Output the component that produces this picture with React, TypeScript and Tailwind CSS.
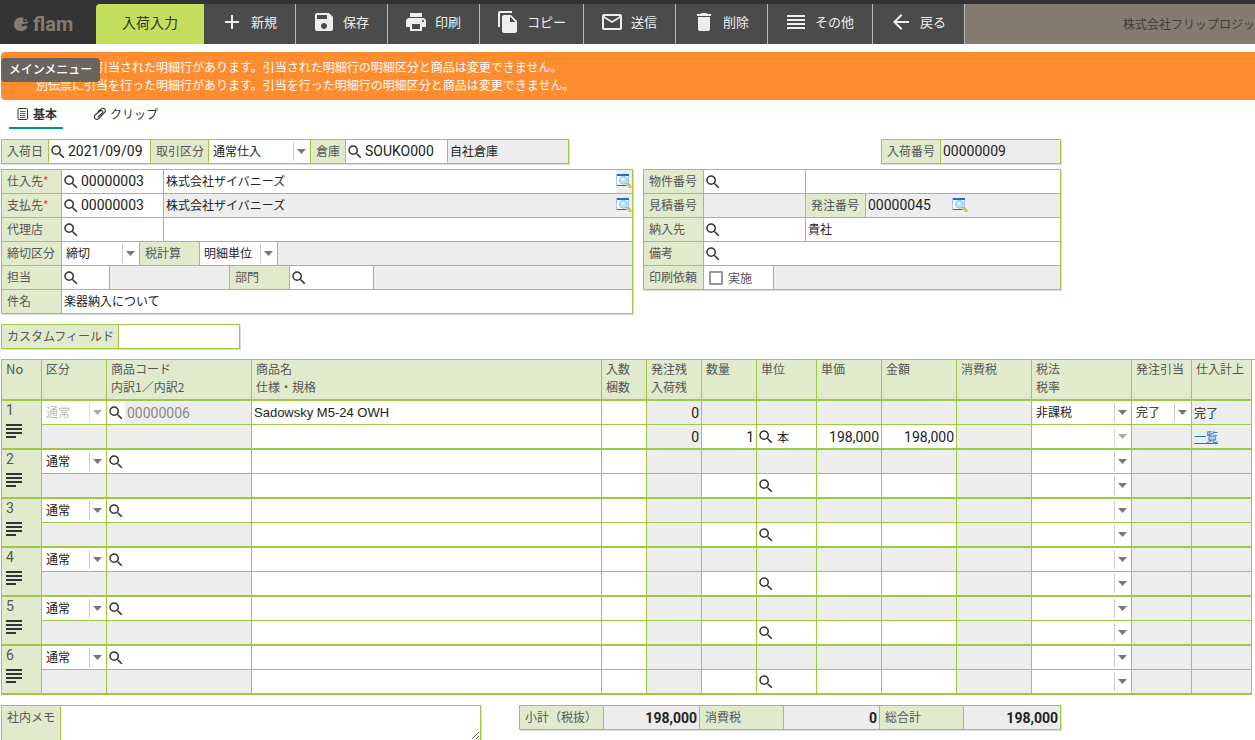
import { useId } from "react";
import { clsx } from "clsx";
import {
  MdAdd,
  MdArrowBack,
  MdDelete,
  MdFileCopy,
  MdMailOutline,
  MdPrint,
  MdReorder,
  MdSave,
  MdSearch,
  MdSubject,
} from "react-icons/md";

const LINE = "border-[#a0c846]";
const NUM = "font-[Roboto,'Noto_Sans_CJK_JP',sans-serif] text-sm";

/* ── Drawings ── */

function LogoMark() {
  return (
    <svg width="15" height="15" viewBox="0 0 15 15" aria-hidden="true">
      <path
        d="M9.8 0.9A7 7 0 1 0 13.6 9.4L11 8.6 8.6 9.8 7.2 8 8.6 7 14.4 6.2 14 4.6 10.4 5.2 8.8 4.6Z"
        fill="#857c70"
      />
      <path d="M11 1.6 13.4 3.2 10.6 4.2Z" fill="#857c70" />
    </svg>
  );
}

function SheetIcon() {
  return (
    <svg width="12" height="14" viewBox="0 0 12 14" fill="none" stroke="#333" aria-hidden="true">
      <rect x="1" y="1.5" width="9.5" height="11" rx="1" />
      <path d="M3 4.5h5.5M3 6.5h5.5M3 8.5h5.5M3 10.5h5.5" strokeWidth="0.8" />
    </svg>
  );
}

function ClipIcon() {
  return (
    <svg width="13" height="14" viewBox="0 0 13 14" fill="none" stroke="#333" strokeWidth="1.1" strokeLinecap="round" aria-hidden="true">
      <path d="M5.2 4.4 8.2 1.9a2.4 2.4 0 0 1 3.4 3.4L6 11.4a2.6 2.6 0 0 1-4.2-3.2L7.4 3.8a1.4 1.4 0 0 1 2 2L5 10" />
    </svg>
  );
}

function PreviewIcon() {
  return (
    <svg width="16" height="16" viewBox="0 0 16 16" aria-hidden="true">
      <rect x="0.5" y="1.5" width="12" height="11" fill="#fafcff" stroke="#a9c4e6" />
      <rect x="1" y="1" width="12" height="2" fill="#2f62d9" />
      <rect x="1" y="12" width="9" height="1" fill="#3a5f9e" />
      <circle cx="7.6" cy="7.3" r="4" fill="#aee6fb" stroke="#8cc4ee" />
      <circle cx="6.6" cy="6.2" r="1.5" fill="#e6faff" />
      <path d="M11 10.5 15 14.5" stroke="#a8812c" strokeWidth="2.4" />
      <path d="M11.2 10.7 14.8 14.3" stroke="#f7e3a0" strokeWidth="1.2" />
    </svg>
  );
}

/* ── Form parts ── */

function Cell({ className, children }: { className?: string; children?: React.ReactNode }) {
  return (
    <div className={clsx("flex h-6 items-center border-l border-t", LINE, className)}>{children}</div>
  );
}

function LabelCell({
  htmlFor,
  required,
  className = "w-[60px]",
  children,
}: {
  htmlFor?: string;
  required?: boolean;
  className?: string;
  children: React.ReactNode;
}) {
  return (
    <Cell className={clsx("shrink-0 bg-[#e1eacd] pb-0.5 pl-[5px] text-[#555]", className)}>
      <label htmlFor={htmlFor} className="whitespace-nowrap">
        {children}
        {required && <span className="text-red-500">*</span>}
      </label>
    </Cell>
  );
}

function SearchButton() {
  return (
    <button type="button" aria-label="検索" className="shrink-0 cursor-pointer text-[#333]">
      <MdSearch size={18} />
    </button>
  );
}

function Field({
  id,
  name,
  value,
  search,
  numeric,
  gray,
  className,
}: {
  id?: string;
  name?: string;
  value?: string;
  search?: boolean;
  numeric?: boolean;
  gray?: boolean;
  className?: string;
}) {
  return (
    <Cell className={clsx(gray ? "bg-[#ededed]" : "bg-white", className)}>
      {search && <SearchButton />}
      <input
        id={id}
        aria-label={name}
        defaultValue={value}
        readOnly={gray}
        className={clsx(
          "h-full w-full min-w-0 pb-0.5 text-[#222] outline-none",
          search ? "pl-px" : "pl-0.5",
          numeric && NUM
        )}
      />
    </Cell>
  );
}

function Select({ id, name, value = "", disabled }: { id?: string; name?: string; value?: string; disabled?: boolean }) {
  return (
    <div className="relative h-full w-full">
      <select
        id={id}
        aria-label={name}
        defaultValue={value}
        disabled={disabled}
        className={clsx(
          "h-full w-full appearance-none pb-0.5 pl-1 pr-4 outline-none disabled:opacity-100",
          disabled ? "text-[#bbb]" : "text-[#222]"
        )}
      >
        <option>{value}</option>
      </select>
      <span
        className={clsx(
          "pointer-events-none absolute inset-y-0.5 right-0 flex w-[17px] items-center border-l pl-[3px]",
          disabled ? "border-[#ddd] text-[#aaa]" : "border-[#ccc] text-[#777]"
        )}
      >
        <svg width="9" height="5" viewBox="0 0 9 5" fill="currentColor" aria-hidden="true">
          <path d="M0 0h9L4.5 5z" />
        </svg>
      </span>
    </div>
  );
}

function Group({ className, children }: { className?: string; children: React.ReactNode }) {
  return (
    <div className={clsx("border-b border-r shadow-[1px_1px_0_#ddd]", LINE, className)}>{children}</div>
  );
}

/* ── Header ── */

const actions = [
  { label: "新規", icon: MdAdd, width: "w-[92px]" },
  { label: "保存", icon: MdSave, width: "w-[92px]" },
  { label: "印刷", icon: MdPrint, width: "w-[92px]" },
  { label: "コピー", icon: MdFileCopy, width: "w-[104px]" },
  { label: "送信", icon: MdMailOutline, width: "w-[92px]" },
  { label: "削除", icon: MdDelete, width: "w-[92px]" },
  { label: "その他", icon: MdReorder, width: "w-[105px]" },
  { label: "戻る", icon: MdArrowBack, width: "w-[92px]" },
];

function Header() {
  return (
    <header className="flex h-11 bg-[#333] pt-1">
      <a href="#menu" className="flex w-24 shrink-0 items-center gap-1 pl-3.5">
        <LogoMark />
        <span className="font-[Roboto,sans-serif] text-xl font-bold text-[#857c70]">flam</span>
      </a>
      <h1 className="flex w-[108px] shrink-0 items-center justify-center rounded-tl bg-[#c4df5d] pb-1 text-sm text-[#333]">
        入荷入力
      </h1>
      <nav className="flex shrink-0">
        {actions.map(({ label, icon: Icon, width }) => (
          <button
            key={label}
            type="button"
            className={clsx(
              "flex cursor-pointer items-center gap-[7px] whitespace-nowrap border-r border-[#bbb] bg-[#4b4b4b] pb-1 pl-4 text-[13px] text-[#eee] hover:bg-[#5a5a5a]",
              width
            )}
          >
            <Icon size={24} className="shrink-0" />
            {label}
          </button>
        ))}
      </nav>
      <div className="flex min-w-0 flex-1 items-center justify-end overflow-hidden whitespace-nowrap bg-[#857c70] text-[#3c3c3c]">
        株式会社フリップロジッ
      </div>
    </header>
  );
}

function Notice() {
  return (
    <div className="relative ml-px mt-2 rounded-l bg-[#ff8d30] py-1.5 pl-[35px] leading-[18px] text-white">
      <p>別伝票から引当された明細行があります。引当された明細行の明細区分と商品は変更できません。</p>
      <p>別伝票に引当を行った明細行があります。引当を行った明細行の明細区分と商品は変更できません。</p>
      <div
        role="tooltip"
        className="absolute left-0 top-1.5 flex h-6 w-[99px] items-center justify-center rounded bg-[#616161]/95 pb-0.5 font-medium text-white"
      >
        メインメニュー
      </div>
    </div>
  );
}

function Tabs() {
  return (
    <nav className="flex h-[29px] gap-[22px] pl-[9px] text-[#333]">
      <a href="#basic" className="flex items-center gap-1 border-b-2 border-[#009688] pl-2 pr-1.5 font-bold">
        <SheetIcon />
        基本
      </a>
      <a href="#clip" className="flex items-center gap-1 border-b-2 border-transparent px-2">
        <ClipIcon />
        クリップ
      </a>
    </nav>
  );
}

/* ── Slip form ── */

function SlipForm() {
  const id = useId();
  return (
    <section className="ml-px mt-2.5 max-w-[1060px]">
      <div className="flex justify-between">
        <Group className="flex">
          <LabelCell htmlFor={id + "date"} className="w-[47px]">入荷日</LabelCell>
          <Field id={id + "date"} search numeric value="2021/09/09" className="w-[102px]" />
          <LabelCell htmlFor={id + "type"} className="w-[58px]">取引区分</LabelCell>
          <Cell className="w-[102px]"><Select id={id + "type"} value="通常仕入" /></Cell>
          <LabelCell htmlFor={id + "wh"} className="w-[35px]">倉庫</LabelCell>
          <Field id={id + "wh"} search numeric value="SOUKO000" className="w-[102px]" />
          <Field name="倉庫名" gray value="自社倉庫" className="w-[121px]" />
        </Group>
        <Group className="flex">
          <LabelCell htmlFor={id + "no"} className="w-[59px]">入荷番号</LabelCell>
          <Field id={id + "no"} gray numeric value="00000009" className="w-[120px]" />
        </Group>
      </div>

      <div className="mt-[5px] flex items-start gap-2.5">
        <Group className="min-w-0 flex-1">
          <div className="flex">
            <LabelCell htmlFor={id + "sup"} required>仕入先</LabelCell>
            <Field id={id + "sup"} search numeric value="00000003" className="w-[102px]" />
            <Field name="仕入先名" value="株式会社ザイバニーズ" className="flex-1" />
            <div className={clsx("flex border-t bg-[#ededed] pt-[3px]", LINE)}>
              <button type="button" aria-label="仕入先を表示" className="h-4"><PreviewIcon /></button>
            </div>
          </div>
          <div className="flex">
            <LabelCell htmlFor={id + "pay"} required>支払先</LabelCell>
            <Field id={id + "pay"} search numeric value="00000003" className="w-[102px]" />
            <Field name="支払先名" gray value="株式会社ザイバニーズ" className="flex-1" />
            <div className={clsx("flex border-t bg-[#ededed] pt-[3px]", LINE)}>
              <button type="button" aria-label="支払先を表示" className="h-4"><PreviewIcon /></button>
            </div>
          </div>
          <div className="flex">
            <LabelCell htmlFor={id + "agency"}>代理店</LabelCell>
            <Field id={id + "agency"} search numeric className="w-[102px]" />
            <Field name="代理店名" className="flex-1" />
          </div>
          <div className="flex">
            <LabelCell htmlFor={id + "close"}>締切区分</LabelCell>
            <Cell className="w-[78px]"><Select id={id + "close"} value="締切" /></Cell>
            <LabelCell htmlFor={id + "tax"}>税計算</LabelCell>
            <Cell className="w-[78px]"><Select id={id + "tax"} value="明細単位" /></Cell>
            <Cell className="flex-1 bg-[#ededed]" />
          </div>
          <div className="flex">
            <LabelCell htmlFor={id + "staff"}>担当</LabelCell>
            <Field id={id + "staff"} search className="w-12" />
            <Field name="担当者名" gray className="w-[120px]" />
            <LabelCell htmlFor={id + "dept"}>部門</LabelCell>
            <Field id={id + "dept"} search className="w-[84px]" />
            <Field name="部門名" gray className="flex-1" />
          </div>
          <div className="flex">
            <LabelCell htmlFor={id + "subject"}>件名</LabelCell>
            <Field id={id + "subject"} value="楽器納入について" className="flex-1" />
          </div>
        </Group>

        <Group className="w-[418px] shrink-0">
          <div className="flex">
            <LabelCell htmlFor={id + "prop"}>物件番号</LabelCell>
            <Field id={id + "prop"} search className="w-[102px]" />
            <Field name="物件名" className="flex-1" />
          </div>
          <div className="flex">
            <LabelCell htmlFor={id + "est"}>見積番号</LabelCell>
            <Field id={id + "est"} gray className="w-[102px]" />
            <LabelCell htmlFor={id + "order"}>発注番号</LabelCell>
            <Field id={id + "order"} gray numeric value="00000045" className="w-[87px]" />
            <div className={clsx("flex flex-1 border-t bg-[#ededed] pt-[3px]", LINE)}>
              <button type="button" aria-label="発注を表示" className="h-4"><PreviewIcon /></button>
            </div>
          </div>
          <div className="flex">
            <LabelCell htmlFor={id + "dest"}>納入先</LabelCell>
            <Field id={id + "dest"} search className="w-[102px]" />
            <Field name="納入先名" value="貴社" className="flex-1" />
          </div>
          <div className="flex">
            <LabelCell htmlFor={id + "note"}>備考</LabelCell>
            <Field id={id + "note"} search className="flex-1" />
          </div>
          <div className="flex">
            <LabelCell htmlFor={id + "print"}>印刷依頼</LabelCell>
            <Cell className="w-[70px] pl-[5px] text-[#555]">
              <label className="flex items-center gap-[5px]">
                <input
                  id={id + "print"}
                  type="checkbox"
                  className="size-3.5 appearance-none rounded-[1px] border-2 border-[#999] bg-white"
                />
                実施
              </label>
            </Cell>
            <Cell className="flex-1 bg-[#ededed]" />
          </div>
        </Group>
      </div>

      <Group className="mt-2.5 flex w-fit">
        <LabelCell htmlFor={id + "custom"} className="w-[117px]">カスタムフィールド</LabelCell>
        <Field id={id + "custom"} className="w-[121px]" />
      </Group>
    </section>
  );
}

/* ── Detail lines ── */

type Line = {
  no: number;
  code?: string;
  name?: string;
  orderRest?: string;
  stockRest?: string;
  qty?: string;
  unit?: string;
  price?: string;
  amount?: string;
  taxType?: string;
  allocation?: string;
  posted?: string;
};

const lines: Line[] = [
  {
    no: 1,
    code: "00000006",
    name: "Sadowsky M5-24 OWH",
    orderRest: "0",
    stockRest: "0",
    qty: "1",
    unit: "本",
    price: "198,000",
    amount: "198,000",
    taxType: "非課税",
    allocation: "完了",
    posted: "完了",
  },
  { no: 2 },
  { no: 3 },
  { no: 4 },
  { no: 5 },
  { no: 6 },
];

const columns = [
  { head: ["No"], width: "w-10" },
  { head: ["区分"], width: "w-[65px]" },
  { head: ["商品コード", "内訳1／内訳2"], width: "w-[145px]" },
  { head: ["商品名", "仕様・規格"], width: "" },
  { head: ["入数", "梱数"], width: "w-[45px]" },
  { head: ["発注残", "入荷残"], width: "w-[55px]" },
  { head: ["数量"], width: "w-[55px]" },
  { head: ["単位"], width: "w-[60px]" },
  { head: ["単価"], width: "w-[65px]" },
  { head: ["金額"], width: "w-[75px]" },
  { head: ["消費税"], width: "w-[75px]" },
  { head: ["税法", "税率"], width: "w-[100px]" },
  { head: ["発注引当"], width: "w-[60px]" },
  { head: ["仕入計上"], width: "w-[61px]" },
];

function Td({ gray, last, className, children }: { gray?: boolean; last?: boolean; className?: string; children?: React.ReactNode }) {
  return (
    <td
      className={clsx(
        "border-l p-0 text-[#222] last:border-r",
        LINE,
        last ? "h-[25px] border-b-2" : "h-6 border-b",
        gray ? "bg-[#ededed]" : "bg-white",
        className
      )}
    >
      {children}
    </td>
  );
}

function CellInput({ name, value, className }: { name: string; value?: string; className?: string }) {
  return (
    <input
      aria-label={name}
      defaultValue={value}
      className={clsx("block h-[23px] w-full min-w-0 px-0.5 outline-none", className)}
    />
  );
}

function CellSelect(props: { name: string; value?: string; disabled?: boolean }) {
  return (
    <div className="h-[23px]">
      <Select {...props} />
    </div>
  );
}

function LineRows({ line }: { line: Line }) {
  const locked = Boolean(line.code);
  const right = clsx(NUM, "text-right");
  return (
    <>
      <tr>
        <td
          rowSpan={2}
          className={clsx("border-b-2 border-l bg-[#e1eacd] p-0 align-top text-[#333]", LINE)}
        >
          <div className={clsx(NUM, "h-[18px] pl-1 leading-[18px]! text-[#555]")}>{line.no}</div>
          <button type="button" aria-label="明細メニュー" className="block cursor-pointer">
            <MdSubject size={24} />
          </button>
        </td>
        <Td><CellSelect name="区分" value="通常" disabled={locked} /></Td>
        <Td>
          <div className="flex h-[23px] items-center">
            <SearchButton />
            <CellInput
              name="商品コード"
              value={line.code}
              className={clsx(NUM, locked && "bg-[#ededed] text-[#888]")}
            />
          </div>
        </Td>
        <Td>
          <CellInput
            name="商品名"
            value={line.name}
            className="font-['Liberation_Sans','Noto_Sans_CJK_JP',sans-serif] text-[13px]"
          />
        </Td>
        <Td><CellInput name="入数" className={right} /></Td>
        <Td gray className={clsx(right, "pr-0.5")}>{line.orderRest}</Td>
        <Td gray />
        <Td gray />
        <Td gray />
        <Td gray />
        <Td gray />
        <Td><CellSelect name="税法" value={line.taxType} /></Td>
        {line.allocation ? (
          <Td><CellSelect name="発注引当" value={line.allocation} /></Td>
        ) : (
          <Td gray />
        )}
        <Td gray className="pl-0.5">{line.posted}</Td>
      </tr>
      <tr>
        <Td last gray />
        <Td last gray />
        <Td last><CellInput name="仕様・規格" /></Td>
        <Td last><CellInput name="梱数" className={right} /></Td>
        <Td last gray className={clsx(right, "pr-0.5")}>{line.stockRest}</Td>
        <Td last><CellInput name="数量" value={line.qty} className={right} /></Td>
        <Td last>
          <div className="flex h-[22px] items-center">
            <SearchButton />
            <CellInput name="単位" value={line.unit} />
          </div>
        </Td>
        <Td last><CellInput name="単価" value={line.price} className={right} /></Td>
        <Td last><CellInput name="金額" value={line.amount} className={right} /></Td>
        <Td last gray />
        <Td last><CellSelect name="税率" disabled={locked} /></Td>
        <Td last gray />
        <Td last gray className="pl-0.5">
          {line.posted && <a href="#list" className="text-[#1976d2] underline">一覧</a>}
        </Td>
      </tr>
    </>
  );
}

function DetailTable() {
  return (
    <section className={clsx("ml-px mt-2.5 border-t pr-[3px]", LINE)}>
      <table className="w-full table-fixed border-separate border-spacing-0">
        <thead>
          <tr>
            {columns.map(({ head, width }) => (
              <th
                key={head[0]}
                className={clsx(
                  "h-[41px] whitespace-nowrap border-b-2 border-l bg-[#e1eacd] p-0 pl-1 text-left align-top font-normal leading-[18px] text-[#555] last:border-r",
                  LINE,
                  width,
                  head[0] === "No" && "text-[13px]"
                )}
              >
                {head.map((text) => (
                  <div key={text}>{text}</div>
                ))}
              </th>
            ))}
          </tr>
        </thead>
        <tbody>
          {lines.map((line) => (
            <LineRows key={line.no} line={line} />
          ))}
        </tbody>
      </table>
    </section>
  );
}

/* ── Memo and totals ── */

const totals = [
  { label: "小計（税抜）", value: "198,000" },
  { label: "消費税", value: "0" },
  { label: "総合計", value: "198,000" },
];

function Footer() {
  return (
    <footer className="ml-px mt-2.5 flex max-w-[1060px] items-start justify-between">
      <Group className="flex w-[480px]">
        <label
          htmlFor="memo"
          className={clsx("w-[59px] shrink-0 border-l border-t bg-[#e1eacd] pl-[5px] pt-px leading-5 text-[#555]", LINE)}
        >
          社内メモ
        </label>
        <textarea id="memo" className={clsx("block h-[35px] w-full resize border-l border-t outline-none", LINE)} />
      </Group>
      <Group className="flex w-[542px]">
        {totals.map(({ label, value }) => (
          <div key={label} className="flex last:flex-1">
            <LabelCell className="w-[84px]">{label}</LabelCell>
            <Cell className={clsx("min-w-24 flex-1 justify-end bg-[#ededed] pr-0.5 font-bold text-[#222]", NUM)}>
              {value}
            </Cell>
          </div>
        ))}
      </Group>
    </footer>
  );
}

export default function App() {
  return (
    <div className="min-w-[1100px] bg-white font-['Noto_Sans_CJK_JP',sans-serif] text-xs">
      <Header />
      <Notice />
      <Tabs />
      <main>
        <SlipForm />
        <DetailTable />
        <Footer />
      </main>
    </div>
  );
}
